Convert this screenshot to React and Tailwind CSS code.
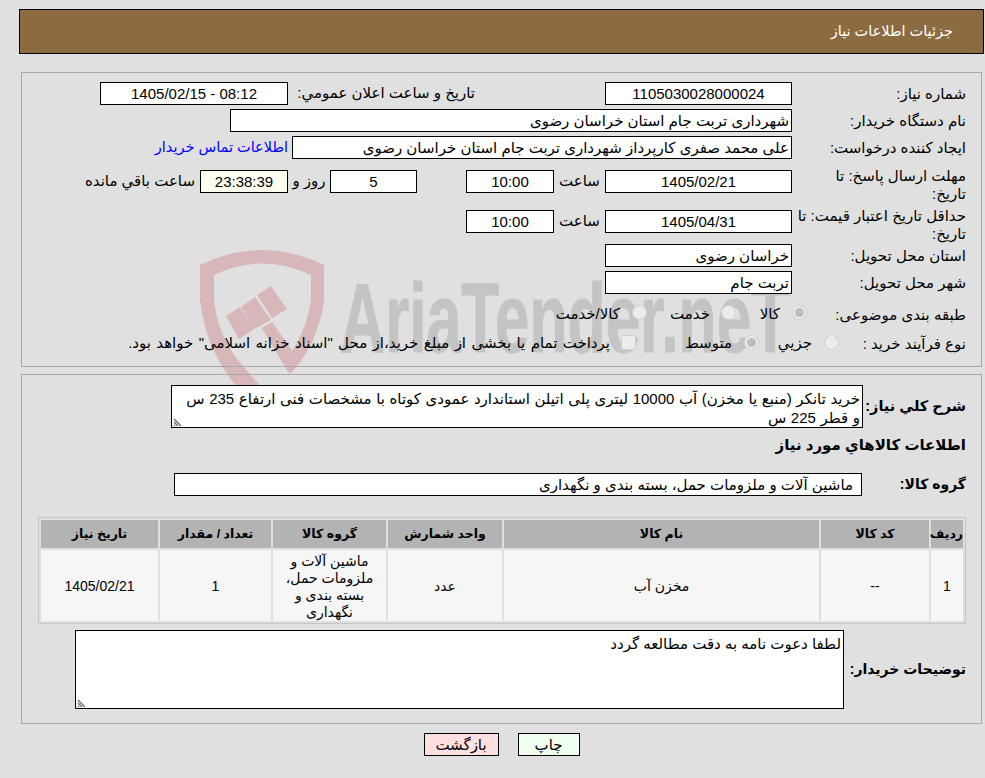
const font = { fontFamily: '"Liberation Sans", "DejaVu Sans", sans-serif' };

function Box({ className = '', children }) {
  return (
    <div className={'h-[23px] border border-black bg-white flex items-center px-[2px] shrink-0 whitespace-nowrap overflow-hidden leading-none ' + className}>
      {children}
    </div>
  );
}

function Label({ children }) {
  return <div className="w-[189px] pr-[15px] pl-[10px] shrink-0 leading-[23px] whitespace-nowrap">{children}</div>;
}

function Radio({ checked }) {
  return (
    <span className="w-[15px] h-[15px] rounded-full bg-[#ececec] border border-[#cfcfcf] flex items-center justify-center shrink-0">
      {checked && <span className="w-[9px] h-[9px] rounded-full bg-[#bdbdbd]" />}
    </span>
  );
}

function Watermark() {
  return (
    <div className="absolute left-[200px] top-[250px] pointer-events-none" dir="ltr">
      <svg width="126" height="145" viewBox="0 0 126 145">
        <path d="M0 15 Q62 -15 124 15 V50 Q118 95 90 124 L84 112 Q106 85 111 50 V25 Q62 2 14 25 V50 Q18 85 38 110 L60 136 L36 136 Q6 100 0 50 Z" fill="#d7b7b9" />
        <path d="M26 66 L40 57 L54 79 L39 89 Z M41 57 L55 47 L71 70 L54 79 Z M57 45 L71 36 L87 59 L72 68 Z" fill="#d7b7b9" />
        <path d="M62 78 L72 72 L100 112 L88 122 Z" fill="#d7b7b9" />
      </svg>
      <span className="absolute left-[140px] top-[13px] text-[99px] leading-[110px] font-bold text-[#c4c4c4] [-webkit-text-stroke:1px_#c4c4c4] whitespace-nowrap origin-left scale-x-[0.63]">AriaTender.neT</span>
    </div>
  );
}

export default function App() {
  const th = 'bg-[#b3b3b3] font-bold text-[12.5px] text-center border-b-2 border-b-[#e0e0e0] whitespace-nowrap h-[30px] px-0';
  const td = 'bg-[#f6f6f6] text-center text-[14px] px-[6px] pt-[2px]';
  const sep = ' border-l-2 border-[#e0e0e0]';
  return (
    <div dir="rtl" style={font} className="relative w-[985px] h-[778px] overflow-hidden bg-[#e0e0e0] text-[15px] text-black pt-[9px] pl-[19px] pr-[1px]">
      <Watermark />
      <div className="relative h-[45px] bg-[#8b6b3f] border border-black text-white text-[14.5px] flex items-center pr-[30px]">جزئيات اطلاعات نیاز</div>

      <div className="relative mt-[18px] ml-[2px] mr-[2px] h-[295px] border border-[#a9a9a9] pt-[9px]">
        <div className="flex flex-col">
          <div className="flex h-[23px] items-center">
            <Label>شماره نیاز:</Label>
            <Box className="w-[187px] justify-center">1105030028000024</Box>
            <div className="w-[130px] shrink-0" />
            <div className="w-[183px] shrink-0 whitespace-nowrap">تاریخ و ساعت اعلان عمومي:</div>
            <Box className="w-[188px] mr-[4px] justify-center"><span dir="ltr">1405/02/15 - 08:12</span></Box>
          </div>
          <div className="flex h-[23px] items-center mt-[4px]">
            <Label>نام دستگاه خریدار:</Label>
            <Box className="w-[562px]">شهرداری تربت جام استان خراسان رضوی</Box>
          </div>
          <div className="flex h-[23px] items-center mt-[4px]">
            <Label>ایجاد کننده درخواست:</Label>
            <Box className="w-[500px]">علی محمد صفری کارپرداز شهرداری تربت جام استان خراسان رضوی</Box>
            <a className="mr-[4px] text-[#0000ff] text-[14.5px] whitespace-nowrap">اطلاعات تماس خریدار</a>
          </div>
          <div className="flex h-[23px] items-center mt-[11px]">
            <Label><span className="block leading-[18px] mt-[6px] whitespace-normal">مهلت ارسال پاسخ: تا تاریخ:</span></Label>
            <Box className="w-[187px] justify-center">1405/02/21</Box>
            <span className="w-[51px] shrink-0 text-center">ساعت</span>
            <Box className="w-[88px] justify-center">10:00</Box>
            <div className="w-[49px] shrink-0" />
            <Box className="w-[87px] justify-center">5</Box>
            <span className="w-[42px] shrink-0 text-center whitespace-nowrap">روز و</span>
            <Box className="w-[88px] justify-center !bg-[#fffff0]">23:38:39</Box>
            <span className="mr-[5px] whitespace-nowrap">ساعت باقي مانده</span>
          </div>
          <div className="flex h-[23px] items-center mt-[17px]">
            <Label><span className="block leading-[18px] mt-[6px] whitespace-normal -ml-[16px]">حداقل تاریخ اعتبار قیمت: تا تاریخ:</span></Label>
            <Box className="w-[187px] justify-center">1405/04/31</Box>
            <span className="w-[51px] shrink-0 text-center">ساعت</span>
            <Box className="w-[88px] justify-center">10:00</Box>
          </div>
          <div className="flex h-[23px] items-center mt-[11px]">
            <Label>استان محل تحویل:</Label>
            <Box className="w-[187px]">خراسان رضوی</Box>
          </div>
          <div className="flex h-[23px] items-center mt-[4px]">
            <Label>شهر محل تحویل:</Label>
            <Box className="w-[187px]">تربت جام</Box>
          </div>
          <div className="flex h-[23px] items-center mt-[9px]">
            <Label>طبقه بندی موضوعی:</Label>
            <div className="flex items-center">
              <span className="w-[15px] -mt-[4px] mr-[-15px]"><Radio checked /></span>
              <span className="mr-[12px] w-[44px] whitespace-nowrap">کالا</span>
              <span className="w-[15px] -mt-[4px]"><Radio /></span>
              <span className="mr-[11px] w-[63px] whitespace-nowrap">خدمت</span>
              <span className="w-[15px] -mt-[4px]"><Radio /></span>
              <span className="mr-[12px] whitespace-nowrap">کالا/خدمت</span>
            </div>
          </div>
          <div className="flex h-[23px] items-center mt-[6px]">
            <Label>نوع فرآیند خرید :</Label>
            <div className="flex items-center">
              <span className="w-[15px] -mt-[2px] mr-[-47px]"><Radio /></span>
              <span className="mr-[12px] w-[53px] whitespace-nowrap">جزیي</span>
              <span className="w-[15px] -mt-[2px]"><Radio checked /></span>
              <span className="mr-[12px] w-[96px] whitespace-nowrap">متوسط</span>
              <span className="w-[15px] h-[15px] -mt-[2px] rounded-[2px] bg-[#ececec] border border-[#cfcfcf]" />
              <span className="mr-[11px] whitespace-nowrap [word-spacing:1.2px]">پرداخت تمام یا بخشی از مبلغ خرید،از محل "اسناد خزانه اسلامی" خواهد بود.</span>
            </div>
          </div>
        </div>
      </div>

      <div className="relative mt-[7px] ml-[2px] mr-[2px] h-[350px] border border-[#a9a9a9] pt-[10px]">
        <div className="flex items-center h-[43px]">
          <div className="w-[118px] pr-[15px] shrink-0 font-bold text-[14.5px] whitespace-nowrap">شرح کلي نیاز:</div>
          <div className="relative w-[692px] h-[43px] border border-black bg-white pr-[2px] pl-[12px] leading-[19px] pt-[3px] shrink-0 [word-spacing:0.4px]">
            خرید تانکر (منبع یا مخزن) آب 10000 لیتری پلی اتیلن استاندارد عمودی کوتاه با مشخصات فنی ارتفاع 235 س و قطر 225 س
            <Grip />
          </div>
        </div>
        <div className="mt-[6px] pr-[15px] font-bold leading-[22px]">اطلاعات کالاهاي مورد نیاز</div>
        <div className="flex items-center mt-[17px] h-[23px]">
          <div className="w-[119px] pr-[15px] shrink-0 font-bold text-[14px] whitespace-nowrap">گروه کالا:</div>
          <Box className="w-[688px] pr-[8px]">ماشین آلات و ملزومات حمل، بسته بندی و نگهداری</Box>
        </div>
        <div className="mt-[21px] mr-[15px] w-[928px] border border-[#c4c4c4] p-[2px]">
          <table className="w-full border-separate border-spacing-[0px] table-fixed">
            <colgroup>
              <col className="w-[34px]" />
              <col className="w-[110px]" />
              <col className="w-[317px]" />
              <col className="w-[116px]" />
              <col className="w-[115px]" />
              <col className="w-[113px]" />
              <col />
            </colgroup>
            <thead>
              <tr>
                {['ردیف', 'کد کالا', 'نام کالا', 'واحد شمارش', 'گروه کالا', 'تعداد / مقدار', 'تاریخ نیاز'].map((h, i) => (
                  <th key={h} className={th + (i < 6 ? sep : '')}>{h}</th>
                ))}
              </tr>
            </thead>
            <tbody>
              <tr>
                <td className={td + sep}>1</td>
                <td className={td + sep}>--</td>
                <td className={td + sep}>مخزن آب</td>
                <td className={td + sep}>عدد</td>
                <td className={td + sep + ' leading-[17px] h-[71px]'}>ماشین آلات و ملزومات حمل، بسته بندی و نگهداری</td>
                <td className={td + sep}>1</td>
                <td className={td}>1405/02/21</td>
              </tr>
            </tbody>
          </table>
        </div>
        <div className="flex items-center mt-[5px] h-[80px]">
          <div className="w-[137px] pr-[15px] shrink-0 font-bold text-[14px] whitespace-nowrap">توضیحات خریدار:</div>
          <div className="relative w-[769px] h-[79px] border border-black bg-white px-[2px] pt-[2px] shrink-0">
            لطفا دعوت نامه به دقت مطالعه گردد
            <Grip />
          </div>
        </div>
      </div>

      <div className="flex justify-center gap-[19px] mt-[9px]">
        <button className="w-[62px] h-[23px] border border-black bg-[#f0fff0] leading-none">چاپ</button>
        <button className="w-[75px] h-[23px] border border-black bg-[#ffe0e0] leading-none">بازگشت</button>
      </div>
    </div>
  );
}

function Grip() {
  return (
    <svg className="absolute left-[1px] bottom-[0px]" width="11" height="11" viewBox="0 0 11 11">
      <path d="M1 3 L8 10 M1 6 L5 10 M1 9 L2 10" stroke="#666" strokeWidth="1.2" fill="none" />
    </svg>
  );
}
